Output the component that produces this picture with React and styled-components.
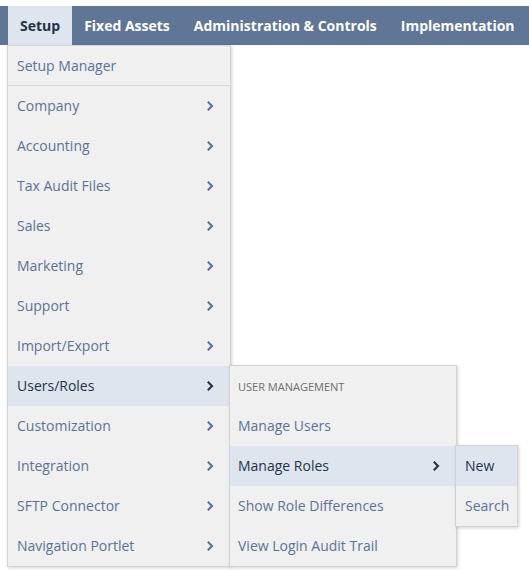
import React from "react";
import styled, { createGlobalStyle } from "styled-components";

const Global = createGlobalStyle`
  html, body { margin: 0; padding: 0; background: #fff; }
  body { font-family: "Open Sans", "Noto Sans", sans-serif; }
  * { box-sizing: border-box; }
`;

const Page = styled.div`
  padding-top: 6px;
  width: 529px;
  height: 571px;
  overflow: hidden;
`;

const NavBar = styled.nav`
  display: flex;
  height: 39px;
  background: #5f7696;
  padding-left: 8px;
  position: relative;
  z-index: 2;
`;

const NavTab = styled.div`
  position: relative;
  display: flex;
  align-items: center;
  padding: 0 12px;
  font-size: 14px;
  font-weight: 700;
  white-space: nowrap;
  color: ${(p) => (p.$active ? "#25324a" : "#ffffff")};
  background: ${(p) => (p.$active ? "#dfe5ee" : "transparent")};
`;

const Menu = styled.div`
  position: absolute;
  left: ${(p) => p.$left}px;
  top: ${(p) => p.$top}px;
  width: ${(p) => p.$width}px;
  background: #f0f0f0;
  border: 1px solid #d3d3d3;
  box-shadow: 1px 1px 3px rgba(0, 0, 0, 0.18);
  display: flex;
  flex-direction: column;
`;

const Row = styled.div`
  position: relative;
  display: flex;
  align-items: center;
  justify-content: space-between;
  height: 40px;
  padding: 0 16px ${(p) => (p.$sep ? 0 : 1)}px ${(p) => p.$pad || 8}px;
  font-size: 14px;
  font-weight: 400;
  white-space: nowrap;
  color: ${(p) => (p.$active ? "#25324a" : "#5b7298")};
  background: ${(p) => (p.$active ? "#dfe5ee" : "transparent")};
  border-bottom: ${(p) => (p.$sep ? "1px solid #d9d9d9" : "none")};
`;

const Header = styled.div`
  display: flex;
  align-items: center;
  height: 40px;
  padding: 0 8px;
  font-size: 11px;
  color: #6e6e6e;
  text-transform: uppercase;
`;

const Chevron = ({ dark }) => (
  <svg width="8" height="12" viewBox="0 0 8 12" style={{ display: "block" }}>
    <path
      d="M1.8 1.8 L6 6 L1.8 10.2"
      fill="none"
      stroke={dark ? "#25324a" : "#5b7298"}
      strokeWidth="2.1"
    />
  </svg>
);

const mainItems = [
  "Company",
  "Accounting",
  "Tax Audit Files",
  "Sales",
  "Marketing",
  "Support",
  "Import/Export",
  "Users/Roles",
  "Customization",
  "Integration",
  "SFTP Connector",
  "Navigation Portlet",
];

export default function App() {
  return (
    <Page>
      <Global />
      <NavBar>
        <NavTab $active>
          Setup
          <Menu $left={-1} $top={39} $width={224}>
            <Row $sep $pad={9}>Setup Manager</Row>
            {mainItems.map((it) => {
              const active = it === "Users/Roles";
              return (
                <Row key={it} $active={active} $pad={9}>
                  <span>{it}</span>
                  <Chevron dark={active} />
                  {active && (
                    <Menu $left={221} $top={-1} $width={228}>
                      <Header>User Management</Header>
                      <Row>Manage Users</Row>
                      <Row $active>
                        <span>Manage Roles</span>
                        <Chevron dark />
                        <Menu $left={225} $top={-1} $width={63}>
                          <Row $active $pad={9}>New</Row>
                          <Row $pad={9}>Search</Row>
                        </Menu>
                      </Row>
                      <Row>Show Role Differences</Row>
                      <Row>View Login Audit Trail</Row>
                    </Menu>
                  )}
                </Row>
              );
            })}
          </Menu>
        </NavTab>
        <NavTab>Fixed Assets</NavTab>
        <NavTab>Administration &amp; Controls</NavTab>
        <NavTab>Implementation</NavTab>
      </NavBar>
    </Page>
  );
}
